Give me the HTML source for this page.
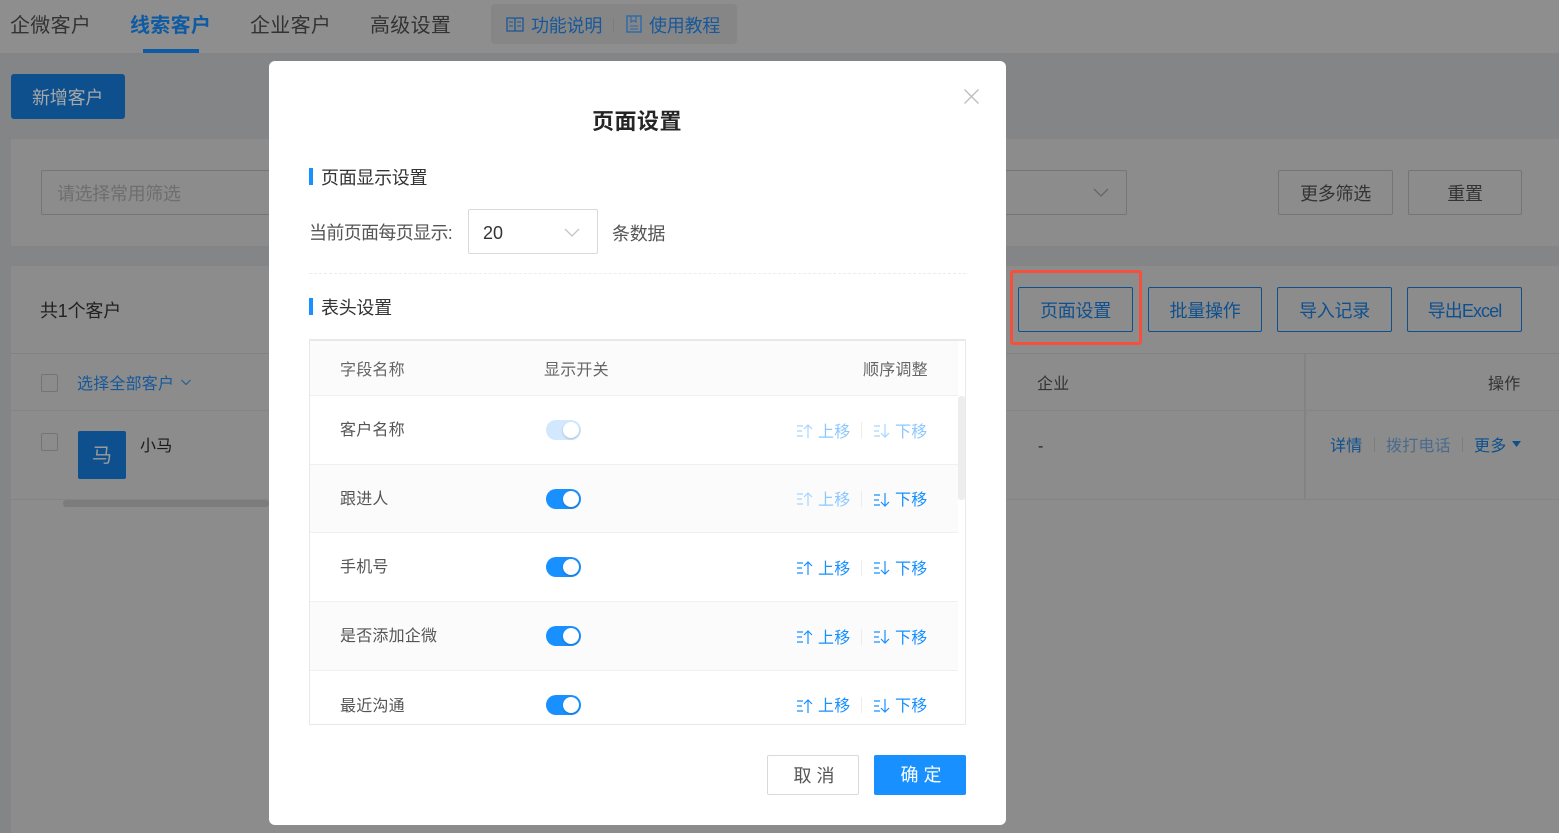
<!DOCTYPE html>
<html lang="zh">
<head>
<meta charset="utf-8">
<title>页面设置</title>
<style>
html,body{margin:0;padding:0;width:1559px;height:833px;overflow:hidden;background:#848587;}
body{position:relative;font-family:"Liberation Sans","Noto Sans CJK SC",sans-serif;color:#3d3d3d;}
.a{position:absolute;box-sizing:border-box;}
.t{position:absolute;white-space:nowrap;line-height:24px;height:24px;}
.f20{font-size:20px;letter-spacing:.3px}.f18{font-size:18px;letter-spacing:-.2px}.f16{font-size:16px;letter-spacing:.2px}
.blue{color:#0e508e}
.btn{position:absolute;box-sizing:border-box;border:1px solid #0e508e;border-radius:2px;color:#0e508e;font-size:18px;letter-spacing:-.3px;text-align:center;}
.gbtn{position:absolute;box-sizing:border-box;border:1px solid #757575;border-radius:2px;color:#333;font-size:18px;letter-spacing:-.3px;text-align:center;line-height:46px;}
.row{position:absolute;left:310px;width:648px;box-sizing:border-box;border-bottom:1px solid #f0f0f0;}
.sw{position:absolute;left:546px;width:35px;height:20px;border-radius:10px;background:#1890ff;}
.sw i{position:absolute;left:17px;top:2px;width:16px;height:16px;border-radius:50%;background:#fff;box-shadow:0 1px 2px rgba(0,0,0,.2);}
.sw.d{background:#d1e8ff;}
.lab{color:#555;font-size:16px;letter-spacing:.2px;}
.mv{color:#1890ff;font-size:16px;letter-spacing:.2px;}
.dis{color:#8cc8ff;}
svg{position:absolute;overflow:visible;}
</style>
</head>
<body>
<!-- background page (already darkened colours) -->
<div class="a" style="left:0;top:0;width:1559px;height:54px;background:#8e8e8e;border-bottom:1px solid #858585"></div>
<div class="t f20" style="left:10px;top:14px;color:#333">企微客户</div>
<div class="t f20" style="left:130px;top:14px;color:#0e5ba3;font-weight:700">线索客户</div>
<div class="a" style="left:143px;top:49px;width:56px;height:4px;background:#0e5ba3"></div>
<div class="t f20" style="left:250px;top:14px;color:#333">企业客户</div>
<div class="t f20" style="left:370px;top:14px;color:#333">高级设置</div>
<div class="a" style="left:491px;top:4px;width:246px;height:40px;background:#868686;border-radius:4px"></div>
<svg style="left:506px;top:16px" width="18" height="17" viewBox="0 0 18 17" fill="none" stroke="#17589a" stroke-width="1.300"><path d="M1 2h6.500a1.500 1.500 0 0 1 1.500 1.500V15H1zM17 2h-6.500A1.500 1.500 0 0 0 9 3.500V15h8z"/><path d="M3 6h4M3 10h4M11 6h4M11 10h4" stroke-width="1"/></svg>
<div class="t f18" style="left:531px;top:14px;color:#17589a">功能说明</div>
<div class="a" style="left:613px;top:18px;width:1px;height:15px;background:#7d7d7d"></div>
<svg style="left:626px;top:15px" width="16" height="18" viewBox="0 0 16 18" fill="none" stroke="#2a6aa8" stroke-width="1.400"><rect x="1" y="1" width="14" height="16"/><path d="M5 1v6l2.500-1.500L10 7V1M4 11h8M4 14h8" stroke-width="1.100"/></svg>
<div class="t f18" style="left:649px;top:14px;color:#17589a">使用教程</div>

<div class="a" style="left:11px;top:74px;width:114px;height:45px;background:#0e508e;border-radius:3px"></div>
<div class="t f18" style="left:32px;top:86px;color:#a8a8a8">新增客户</div>

<div class="a" style="left:11px;top:139px;width:1548px;height:107px;background:#8c8c8c"></div>
<div class="a" style="left:41px;top:170px;width:1086px;height:45px;border:1px solid #757575;border-radius:2px"></div>
<div class="t" style="left:57px;top:182px;color:#6e6e6e;font-size:18px;letter-spacing:-.35px">请选择常用筛选</div>
<svg style="left:1093px;top:188px" width="16" height="10" viewBox="0 0 16 10" fill="none" stroke="#666" stroke-width="1.300"><path d="M1 1l7 7 7-7"/></svg>
<div class="gbtn" style="left:1278px;top:170px;width:115px;height:45px">更多筛选</div>
<div class="gbtn" style="left:1408px;top:170px;width:114px;height:45px">重置</div>

<div class="a" style="left:11px;top:266px;width:1548px;height:567px;background:#8c8c8c"></div>
<div class="t f18" style="left:40px;top:299px;color:#222">共1个客户</div>
<div class="a" style="left:11px;top:353px;width:1548px;height:1px;background:#828282"></div>
<div class="a" style="left:11px;top:410px;width:1548px;height:1px;background:#848484"></div>
<div class="a" style="left:11px;top:499px;width:1548px;height:1px;background:#848484"></div>
<div class="a" style="left:1304px;top:354px;width:2px;height:145px;background:#838383"></div>

<div class="a" style="left:41px;top:374px;width:17px;height:18px;border:1px solid #747474;border-radius:2px"></div>
<div class="t f16" style="left:77px;top:373px;color:#17589a">选择全部客户</div>
<svg style="left:181px;top:379px" width="10" height="7" viewBox="0 0 10 7" fill="none" stroke="#17589a" stroke-width="1"><path d="M.5 1l4.500 4.500L9.500 1"/></svg>
<div class="a" style="left:41px;top:433px;width:17px;height:18px;border:1px solid #747474;border-radius:2px"></div>
<div class="a" style="left:78px;top:431px;width:48px;height:48px;background:#0e508e;border-radius:2px"></div>
<div class="t" style="left:78px;top:444px;width:48px;text-align:center;font-size:20px;color:#9a9a9a">马</div>
<div class="t f16" style="left:140px;top:435px;color:#1a1a1a">小马</div>
<div class="a" style="left:63px;top:500px;width:206px;height:7px;background:#7c7c7c;border-radius:3px"></div>

<div class="t f16" style="left:1037px;top:373px;color:#333">企业</div>
<div class="t f16" style="left:1488px;top:373px;color:#333">操作</div>
<div class="t f16" style="left:1038px;top:435px;color:#222">-</div>
<div class="t f16" style="left:1330px;top:435px;color:#0e508e">详情</div>
<div class="a" style="left:1374px;top:437px;width:1px;height:15px;background:#7e7e7e"></div>
<div class="t f16" style="left:1386px;top:435px;color:#4a6b8d">拨打电话</div>
<div class="a" style="left:1462px;top:437px;width:1px;height:15px;background:#7e7e7e"></div>
<div class="t f16" style="left:1474px;top:435px;color:#0e508e">更多</div>
<svg style="left:1512px;top:441px" width="9" height="6" viewBox="0 0 9 6"><path d="M0 0h9L4.500 6z" fill="#0e508e"/></svg>

<div class="btn" style="left:1018px;top:287px;width:115px;height:45px;line-height:46px">页面设置</div>
<div class="btn" style="left:1148px;top:287px;width:114px;height:45px;line-height:46px">批量操作</div>
<div class="btn" style="left:1277px;top:287px;width:115px;height:45px;line-height:46px">导入记录</div>
<div class="btn" style="left:1407px;top:287px;width:115px;height:45px;line-height:46px;letter-spacing:-.9px">导出Excel</div>
<div class="a" style="left:1010px;top:270px;width:132px;height:75px;border:3px solid #f4503c;border-radius:3px"></div>

<!-- modal -->
<div class="a" style="left:269px;top:61px;width:737px;height:764px;background:#fff;border-radius:6px"></div>
<svg style="left:964px;top:89px" width="15" height="15" viewBox="0 0 15 15" fill="none" stroke="#bdbdbd" stroke-width="1.300"><path d="M.5.500l14 14M14.500.500l-14 14"/></svg>
<div class="t" style="left:592px;top:110px;font-size:22px;font-weight:700;color:#262626;letter-spacing:.5px">页面设置</div>

<div class="a" style="left:309px;top:168px;width:4px;height:17px;background:#1890ff"></div>
<div class="t" style="left:321px;top:166px;color:#333;font-size:18px;letter-spacing:-.3px">页面显示设置</div>
<div class="t" style="left:309px;top:221px;font-size:18px;letter-spacing:-.65px;color:#555">当前页面每页显示:</div>
<div class="a" style="left:468px;top:209px;width:130px;height:45px;border:1px solid #d9d9d9;border-radius:2px"></div>
<div class="t" style="left:483px;top:221px;font-size:18px;color:#333">20</div>
<svg style="left:564px;top:228px" width="16" height="10" viewBox="0 0 16 10" fill="none" stroke="#c4c4c4" stroke-width="1.300"><path d="M1 1l7 7 7-7"/></svg>
<div class="t" style="left:612px;top:222px;color:#555;font-size:18px;letter-spacing:-.3px">条数据</div>
<div class="a" style="left:309px;top:273px;width:657px;border-top:1px dashed #ececec"></div>

<div class="a" style="left:309px;top:298px;width:4px;height:17px;background:#1890ff"></div>
<div class="t" style="left:321px;top:296px;color:#333;font-size:18px;letter-spacing:-.3px">表头设置</div>

<div class="a" style="left:309px;top:339px;width:657px;height:386px;border:1px solid #e8e8e8;border-top-width:2px"></div>
<div class="row" style="top:341px;height:55px;background:#fbfbfb"></div>
<div class="row" style="top:396px;height:69px;background:#fff"></div>
<div class="row" style="top:465px;height:68px;background:#fbfbfb"></div>
<div class="row" style="top:533px;height:69px;background:#fff"></div>
<div class="row" style="top:602px;height:69px;background:#fbfbfb"></div>
<div class="a" style="left:958px;top:396px;width:7px;height:104px;background:#ededed;border-radius:3px"></div>

<div class="t lab" style="left:340px;top:359px;color:#666">字段名称</div>
<div class="t lab" style="left:544px;top:359px;color:#666">显示开关</div>
<div class="t lab" style="left:863px;top:359px;color:#666">顺序调整</div>

<div class="t lab" style="left:340px;top:419px">客户名称</div>
<div class="t lab" style="left:340px;top:488px">跟进人</div>
<div class="t lab" style="left:340px;top:556px">手机号</div>
<div class="t lab" style="left:340px;top:625px">是否添加企微</div>
<div class="t lab" style="left:340px;top:695px">最近沟通</div>

<div class="sw d" style="top:420px"><i></i></div>
<div class="sw" style="top:489px"><i></i></div>
<div class="sw" style="top:557px"><i></i></div>
<div class="sw" style="top:626px"><i></i></div>
<div class="sw" style="top:695px"><i></i></div>

<!-- row 1 -->
<svg style="left:797px;top:424px" width="17" height="14" viewBox="0 0 17 14" fill="none" stroke="#a6d5ff" stroke-width="1.200"><path d="M0 2h6M0 7h5M0 12h6M11 14V1M7 5l4-4 4 4"/></svg>
<div class="t mv dis" style="left:818px;top:421px">上移</div>
<div class="a" style="left:861px;top:422px;width:1px;height:16px;background:#ececec"></div>
<svg style="left:874px;top:424px" width="17" height="14" viewBox="0 0 17 14" fill="none" stroke="#a6d5ff" stroke-width="1.200"><path d="M0 2h6M0 7h5M0 12h6M11 0v13M7 9l4 4 4-4"/></svg>
<div class="t mv dis" style="left:895px;top:421px">下移</div>
<!-- row 2 -->
<svg style="left:797px;top:492px" width="17" height="14" viewBox="0 0 17 14" fill="none" stroke="#a6d5ff" stroke-width="1.200"><path d="M0 2h6M0 7h5M0 12h6M11 14V1M7 5l4-4 4 4"/></svg>
<div class="t mv dis" style="left:818px;top:489px">上移</div>
<div class="a" style="left:861px;top:491px;width:1px;height:16px;background:#ececec"></div>
<svg style="left:874px;top:493px" width="17" height="14" viewBox="0 0 17 14" fill="none" stroke="#1890ff" stroke-width="1.200"><path d="M0 2h6M0 7h5M0 12h6M11 0v13M7 9l4 4 4-4"/></svg>
<div class="t mv" style="left:895px;top:489px">下移</div>
<!-- row 3 -->
<svg style="left:797px;top:561px" width="17" height="14" viewBox="0 0 17 14" fill="none" stroke="#1890ff" stroke-width="1.200"><path d="M0 2h6M0 7h5M0 12h6M11 14V1M7 5l4-4 4 4"/></svg>
<div class="t mv" style="left:818px;top:558px">上移</div>
<div class="a" style="left:861px;top:560px;width:1px;height:16px;background:#ececec"></div>
<svg style="left:874px;top:561px" width="17" height="14" viewBox="0 0 17 14" fill="none" stroke="#1890ff" stroke-width="1.200"><path d="M0 2h6M0 7h5M0 12h6M11 0v13M7 9l4 4 4-4"/></svg>
<div class="t mv" style="left:895px;top:558px">下移</div>
<!-- row 4 -->
<svg style="left:797px;top:630px" width="17" height="14" viewBox="0 0 17 14" fill="none" stroke="#1890ff" stroke-width="1.200"><path d="M0 2h6M0 7h5M0 12h6M11 14V1M7 5l4-4 4 4"/></svg>
<div class="t mv" style="left:818px;top:627px">上移</div>
<div class="a" style="left:861px;top:629px;width:1px;height:16px;background:#ececec"></div>
<svg style="left:874px;top:630px" width="17" height="14" viewBox="0 0 17 14" fill="none" stroke="#1890ff" stroke-width="1.200"><path d="M0 2h6M0 7h5M0 12h6M11 0v13M7 9l4 4 4-4"/></svg>
<div class="t mv" style="left:895px;top:627px">下移</div>
<!-- row 5 -->
<svg style="left:797px;top:699px" width="17" height="14" viewBox="0 0 17 14" fill="none" stroke="#1890ff" stroke-width="1.200"><path d="M0 2h6M0 7h5M0 12h6M11 14V1M7 5l4-4 4 4"/></svg>
<div class="t mv" style="left:818px;top:695px">上移</div>
<div class="a" style="left:861px;top:697px;width:1px;height:16px;background:#ececec"></div>
<svg style="left:874px;top:699px" width="17" height="14" viewBox="0 0 17 14" fill="none" stroke="#1890ff" stroke-width="1.200"><path d="M0 2h6M0 7h5M0 12h6M11 0v13M7 9l4 4 4-4"/></svg>
<div class="t mv" style="left:895px;top:695px">下移</div>

<div class="a" style="left:767px;top:755px;width:92px;height:40px;border:1px solid #d9d9d9;border-radius:2px;background:#fff;color:#555;font-size:18px;letter-spacing:5px;padding-left:7px;text-align:center;line-height:40px">取消</div>
<div class="a" style="left:874px;top:755px;width:92px;height:40px;border-radius:2px;background:#1890ff;color:#fff;font-size:18px;letter-spacing:5px;padding-left:7px;text-align:center;line-height:41px">确定</div>
</body>
</html>
